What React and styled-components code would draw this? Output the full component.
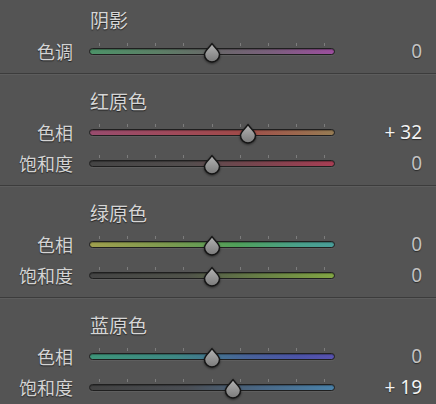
import React from "react";
import styled, { createGlobalStyle } from "styled-components";

const Global = createGlobalStyle`
  html, body { margin: 0; padding: 0; background: #545454; }
  body { width: 436px; height: 404px; overflow: hidden; }
`;

const Panel = styled.div`
  width: 436px;
  height: 404px;
  overflow: hidden;
  background: #545454;
  font-family: "Noto Sans CJK SC", "Noto Sans", sans-serif;
`;

const Section = styled.div`
  padding: ${(p) => (p.$first ? "8px" : "15px")} 0 6px;
  border-bottom: 1px solid #3c3c3c;
  & + & {
    box-shadow: inset 0 1px 0 #5d5d5d;
  }
`;

const Header = styled.div`
  height: 24px;
  line-height: 24px;
  margin: 0 0 4px 90px;
  font-size: 19px;
  color: #d6d6d6;
  text-shadow: 0 1px 1px rgba(0, 0, 0, 0.6);
`;

const Row = styled.div`
  display: flex;
  align-items: center;
  height: 31px;
`;

const Label = styled.div`
  width: 73px;
  margin-right: 16px;
  text-align: right;
  font-size: 18px;
  line-height: 31px;
  color: #d4d4d4;
  text-shadow: 0 1px 1px rgba(0, 0, 0, 0.6);
  white-space: nowrap;
`;

const Slider = styled.div`
  position: relative;
  width: 246px;
  height: 31px;
  display: flex;
  align-items: center;
`;

const Ticks = styled.div`
  position: absolute;
  left: 10px;
  right: 10px;
  top: 7px;
  display: flex;
  justify-content: space-between;
`;

const Tick = styled.span`
  width: 1px;
  height: 3px;
  background: #8a8a8a;
  opacity: 0.75;
`;

const Track = styled.div`
  width: 100%;
  height: 7px;
  border-radius: 4px;
  border: 1px solid #1f1f1f;
  box-sizing: border-box;
  background: ${(p) => p.$bg};
  box-shadow: 0 1px 0 rgba(255, 255, 255, 0.06), inset 0 1px 1px rgba(0, 0, 0, 0.3);
`;

const Thumb = styled.svg`
  position: absolute;
  top: 6px;
  width: 18px;
  height: 21px;
  margin-left: -9px;
  filter: drop-shadow(0 1px 1px rgba(0, 0, 0, 0.5));
`;

const Value = styled.div`
  flex: 1;
  padding-right: 14px;
  text-align: right;
  font-family: "Noto Sans", "Open Sans", sans-serif;
  font-size: 19px;
  line-height: 31px;
  color: ${(p) => (p.$active ? "#f4f4f4" : "#c2c2c2")};
  text-shadow: 0 1px 1px rgba(0, 0, 0, 0.5);
`;

const sections = [
  {
    title: "阴影",
    rows: [
      {
        label: "色调",
        value: 0,
        bg: "linear-gradient(90deg, #4c9268 0%, #5c7f66 28%, #686868 50%, #7a5f7c 74%, #9c4e9e 100%)",
      },
    ],
  },
  {
    title: "红原色",
    rows: [
      {
        label: "色相",
        value: 32,
        bg: "linear-gradient(90deg, #984c6e 0%, #a04a5a 35%, #a04a4a 60%, #9c684e 85%, #967c54 100%)",
      },
      {
        label: "饱和度",
        value: 0,
        bg: "linear-gradient(90deg, #454545 0%, #534e4e 40%, #74464e 65%, #a83e54 100%)",
      },
    ],
  },
  {
    title: "绿原色",
    rows: [
      {
        label: "色相",
        value: 0,
        bg: "linear-gradient(90deg, #a0a04e 0%, #7c9a50 32%, #50a05a 60%, #4aa08a 85%, #4a9e9a 100%)",
      },
      {
        label: "饱和度",
        value: 0,
        bg: "linear-gradient(90deg, #454545 0%, #50534a 40%, #688046 70%, #82a644 100%)",
      },
    ],
  },
  {
    title: "蓝原色",
    rows: [
      {
        label: "色相",
        value: 0,
        bg: "linear-gradient(90deg, #3e967a 0%, #3e8884 35%, #48629a 65%, #4c54a8 85%, #5852b0 100%)",
      },
      {
        label: "饱和度",
        value: 19,
        bg: "linear-gradient(90deg, #434343 0%, #4a4e54 40%, #4a6886 70%, #4a82aa 100%)",
      },
    ],
  },
];

const fmt = (v) => (v > 0 ? `+ ${v}` : v < 0 ? `- ${-v}` : "0");

function ThumbIcon({ left, id }) {
  return (
    <Thumb viewBox="0 0 18 21" style={{ left }}>
      <defs>
        <linearGradient id={id} x1="0" y1="0" x2="0" y2="1">
          <stop offset="0" stopColor="#b4b4b4" />
          <stop offset="1" stopColor="#7a7a7a" />
        </linearGradient>
      </defs>
      <path
        d="M9 1.5 C11 5 16.5 8.5 16.5 12.5 A7.5 7.5 0 0 1 1.5 12.5 C1.5 8.5 7 5 9 1.5 Z"
        fill={`url(#${id})`}
        stroke="#151515"
        strokeWidth="1.5"
        strokeLinejoin="round"
      />
    </Thumb>
  );
}

function SliderRow({ label, value, bg, id }) {
  const left = 123 + value * 1.13;
  return (
    <Row>
      <Label>{label}</Label>
      <Slider>
        <Ticks>
          {Array.from({ length: 9 }).map((_, i) => (
            <Tick key={i} />
          ))}
        </Ticks>
        <Track $bg={bg} />
        <ThumbIcon left={left} id={id} />
      </Slider>
      <Value $active={value !== 0}>{fmt(value)}</Value>
    </Row>
  );
}

export default function App() {
  return (
    <>
      <Global />
      <Panel>
        {sections.map((s, si) => (
          <Section key={s.title} $first={si === 0}>
            <Header>{s.title}</Header>
            {s.rows.map((r, ri) => (
              <SliderRow key={r.label} {...r} id={`g${si}${ri}`} />
            ))}
          </Section>
        ))}
      </Panel>
    </>
  );
}
